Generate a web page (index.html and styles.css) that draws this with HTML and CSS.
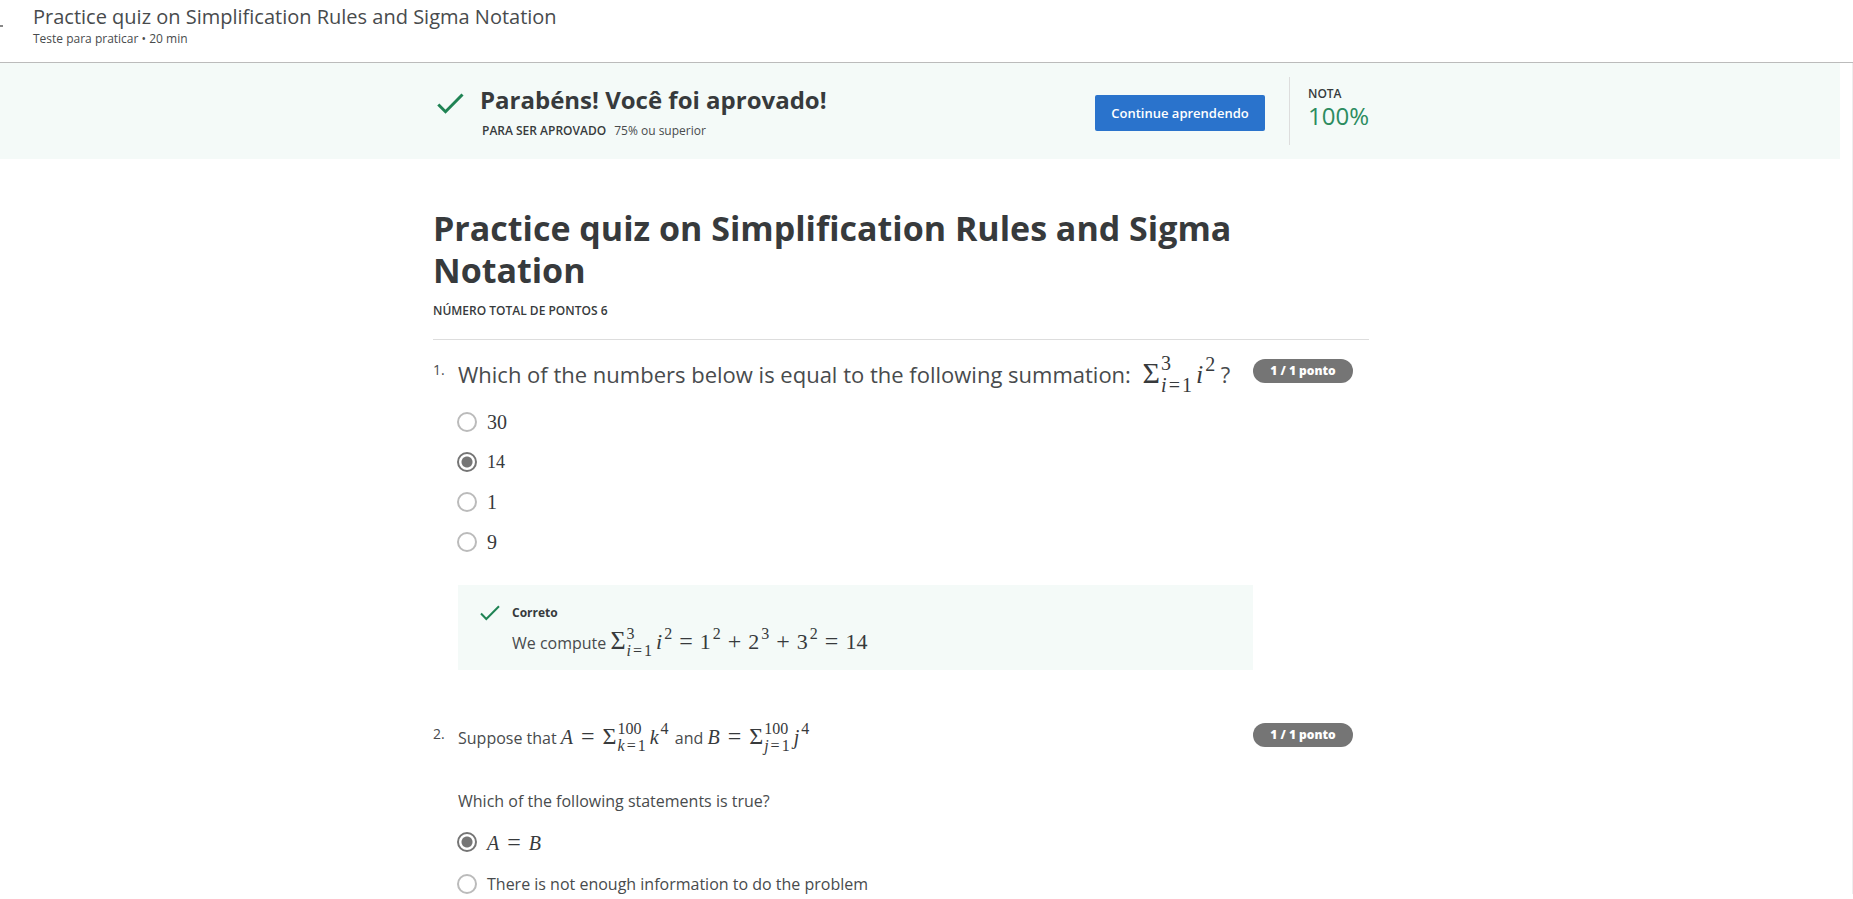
FILE: index.html
```html
<!DOCTYPE html>
<html lang="pt-BR">
<head>
<meta charset="utf-8">
<title>Practice quiz on Simplification Rules and Sigma Notation</title>
<link rel="stylesheet" href="styles.css">
</head>
<body>
<header class="topbar">
  <span class="back-edge"></span>
  <div>
    <div class="topbar-title">Practice quiz on Simplification Rules and Sigma Notation</div>
    <div class="topbar-sub">Teste para praticar • 20 min</div>
  </div>
</header>
<div class="scroller">
  <section class="banner">
    <div class="banner-inner">
      <svg class="check-large" viewBox="0 0 27 21" aria-hidden="true"><path d="M1.3 11.5 L8.5 18.7 L25.5 1.5"/></svg>
      <div class="banner-text">
        <h2 class="banner-title">Parabéns! Você foi aprovado!</h2>
        <p class="banner-sub"><strong>PARA SER APROVADO</strong><span>75% ou superior</span></p>
      </div>
      <button class="continue" type="button">Continue aprendendo</button>
      <div class="grade">
        <div class="grade-label">NOTA</div>
        <div class="grade-value">100%</div>
      </div>
    </div>
  </section>
  <main class="quiz">
    <h1 class="quiz-title">Practice quiz on Simplification Rules and Sigma Notation</h1>
    <div class="quiz-points">NÚMERO TOTAL DE PONTOS 6</div>

    <section class="question">
      <div class="number">1.</div>
      <div class="body">
        <p class="prompt prompt-large">Which of the numbers below is equal to the following summation: <span class="math math-large"><span class="sigma">Σ</span><span class="scripts"><span>3</span><span><i>i</i><b>=</b>1</span></span><i>i</i><sup>2</sup></span> ?</p>
        <div class="options">
          <label class="option"><input type="radio" name="q1"><span class="math">30</span></label>
          <label class="option"><input type="radio" name="q1" checked><span class="math math-small">14</span></label>
          <label class="option"><input type="radio" name="q1"><span class="math">1</span></label>
          <label class="option"><input type="radio" name="q1"><span class="math">9</span></label>
        </div>
        <div class="feedback">
          <svg class="check-small" viewBox="0 0 20 16" aria-hidden="true"><path d="M1 8.5 L6.3 14 L19 1.2"/></svg>
          <div>
            <div class="feedback-title">Correto</div>
            <p class="feedback-text">We compute <span class="math math-medium"><span class="sigma">Σ</span><span class="scripts"><span>3</span><span><i>i</i><b>=</b>1</span></span><i>i</i><sup>2</sup><b>=</b>1<sup>2</sup><b>+</b>2<sup>3</sup><b>+</b>3<sup>2</sup><b>=</b>14</span></p>
          </div>
        </div>
      </div>
      <div class="pill">1 / 1 ponto</div>
    </section>

    <section class="question">
      <div class="number">2.</div>
      <div class="body">
        <p class="prompt">Suppose that <span class="math"><i>A</i><b>=</b><span class="sigma">Σ</span><span class="scripts"><span>100</span><span><i>k</i><b>=</b>1</span></span><i>k</i><sup>4</sup></span> and <span class="math"><i>B</i><b>=</b><span class="sigma">Σ</span><span class="scripts"><span>100</span><span><i>j</i><b>=</b>1</span></span><i>j</i><sup>4</sup></span></p>
        <p class="prompt prompt-second">Which of the following statements is true?</p>
        <div class="options options-wide">
          <label class="option"><input type="radio" name="q2" checked><span class="math"><i>A</i><b>=</b><i>B</i></span></label>
          <label class="option"><input type="radio" name="q2"><span>There is not enough information to do the problem</span></label>
        </div>
      </div>
      <div class="pill">1 / 1 ponto</div>
    </section>
  </main>
</div>
</body>
</html>
```
FILE: styles.css
```css
* { box-sizing: border-box; }
body, h1, h2, p { margin: 0; }
body {
  font-family: "Open Sans", sans-serif;
  font-size: 16px;
  color: #484b4d;
  background: #fff;
}

.topbar {
  display: flex;
  height: 63px;
  padding-top: 2px;
  border-bottom: 1px solid #bbb;
}
.back-edge { width: 3px; height: 2px; margin: 23px 30px 0 0; background: #888; }
.topbar-title { font-size: 20px; line-height: 30px; }
.topbar-sub { font-size: 12px; line-height: 14px; }

.scroller { border-right: 1px solid #eee; padding-right: 12px; }
.banner { background: #f4faf8; padding-left: 432px; }
.banner-inner {
  display: flex;
  align-items: center;
  max-width: 937px;
  height: 96px;
}
svg path { fill: none; stroke: #1f8354; stroke-width: 3; }
.check-large { width: 27px; height: 21px; margin: 0 16px 16px 5px; }
.check-small { width: 20px; height: 16px; flex: none; margin-top: 4px; }
.check-small path { stroke-width: 2; }
.banner-text { flex: 1; padding-top: 3px; }
.banner-title { font-size: 24px; font-weight: 700; line-height: 36px; color: #373a3c; }
.banner-sub { display: flex; gap: 8px; padding-left: 2px; font-size: 12px; line-height: 26px; }
.banner-sub strong, .grade-label, .quiz-points { font-weight: 600; color: #373a3c; }
.continue {
  width: 170px;
  height: 36px;
  margin: 4px 24px 0 0;
  padding: 0;
  border: 0;
  border-radius: 2px;
  background: #2a73cc;
  color: #fff;
  font: 600 13px "Open Sans", sans-serif;
}
.grade { height: 68px; width: 80px; padding: 9px 0 0 18px; border-left: 1px solid #ddd; }
.grade-label { font-size: 12px; line-height: 16px; }
.grade-value { font-size: 24px; line-height: 28px; color: #2c8c60; }

.quiz { max-width: 1369px; padding: 48px 0 0 433px; }
.quiz-title { font-size: 34px; font-weight: 700; line-height: 42px; color: #373a3c; }
.quiz-points {
  height: 49px;
  padding-top: 8px;
  border-bottom: 1px solid #ddd;
  font-size: 12px;
  line-height: 24px;
}

.question { display: flex; }
.number { width: 25px; padding-top: 19px; font-size: 14px; line-height: 22px; }
.body { flex: 1; padding-top: 14px; }
.pill {
  width: 100px;
  height: 24px;
  margin: 19px 16px 0 0;
  border-radius: 12px;
  background: #757575;
  color: #fff;
  font-size: 12px;
  font-weight: 800;
  line-height: 24px;
  text-align: center;
}
.prompt { height: 40px; line-height: 40px; white-space: nowrap; }
.prompt-large { font-size: 22px; line-height: 32px; }
.prompt-second { margin-top: 23px; }

.options { display: flex; flex-direction: column; gap: 20px; padding-top: 18px; }
.option { display: flex; align-items: center; gap: 10px; height: 20px; margin-left: -1px; }
.options-wide { gap: 22px; padding-top: 11px; }
.option input {
  appearance: none;
  width: 20px;
  height: 20px;
  margin: 0;
  border: 2px solid #bbb;
  border-radius: 50%;
}
.option input:checked {
  border-color: #757575;
  background: radial-gradient(circle, #757575 5px, transparent 6px);
}

.feedback {
  display: flex;
  gap: 12px;
  height: 85px;
  margin: 33px 0 34px;
  padding: 16px 22px;
  background: #f4faf8;
}
.feedback-title { font-size: 12px; font-weight: 700; line-height: 24px; color: #373a3c; }
.feedback-text { height: 32px; line-height: 30px; }

.math { font-family: "Liberation Serif", serif; font-size: 20px; line-height: 1; color: #373a3c; }
.math-small { font-size: 18px; }
.math-medium { font-size: 22px; }
.math-large { font-size: 26px; margin-left: 6px; }
.math b { margin: 0 8px; font-size: 24px; font-weight: 400; line-height: 1; }
.math-medium > b { margin: 0 7px; }
.math sup { margin: 0 2px; font-size: 16px; line-height: 1; vertical-align: 10px; }
.math-medium sup { margin: 0 0 0 2px; }
.math-large sup { margin-right: 0; font-size: 20px; vertical-align: 12px; }
.sigma { font-size: 24px; line-height: 1; }
.math-medium .sigma { font-size: 26px; }
.math-large .sigma { font-size: 30px; }
.scripts {
  display: inline-flex;
  flex-direction: column;
  margin: 0 4px 0 1px;
  font-size: 16px;
  line-height: 17px;
  vertical-align: 10px;
}
.math .scripts b { margin: 0 2px; font-size: 16px; line-height: 12px; }
.math-large .scripts { margin-top: -4px; font-size: 20px; line-height: 22px; vertical-align: 13px; }
.math-large .scripts b { font-size: 20px; }
```
